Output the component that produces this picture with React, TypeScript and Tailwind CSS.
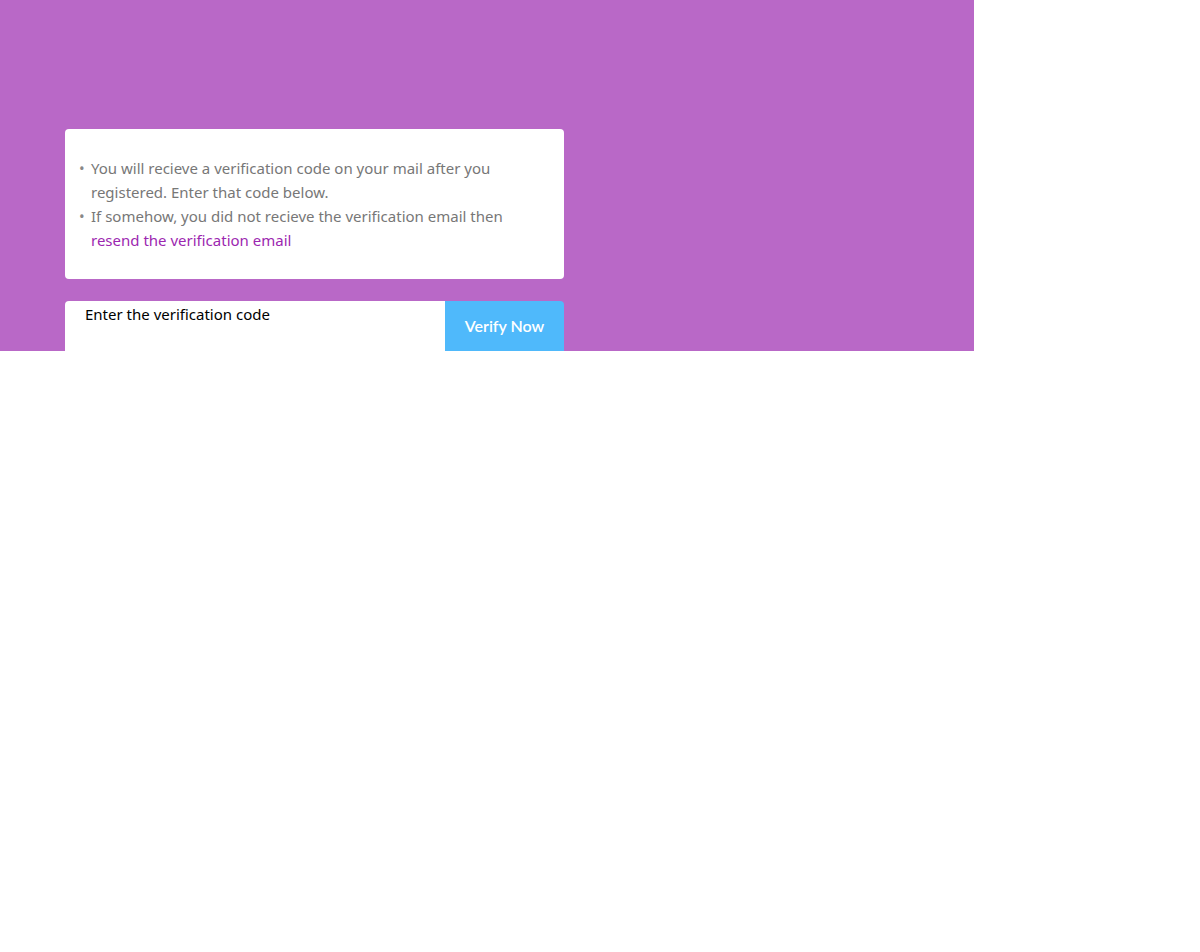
import React from "react";

function Item({ children }: { children: React.ReactNode }) {
  return (
    <li className="flex">
      <span className="w-[26px] shrink-0 pl-[14px] text-[15px] leading-[24px] text-[#888888]">•</span>
      <span>{children}</span>
    </li>
  );
}

export default function App() {
  return (
    <div className="w-[1200px] h-[952px] bg-white" style={{ fontFamily: '"Noto Sans", "Open Sans", sans-serif' }}>
      <div className="w-[974px] h-[351px] overflow-hidden bg-[#b968c7] pt-[129px] pl-[65px]">
        <div className="w-[499px] h-[150px] bg-white rounded-[4px] pt-[27px] pr-4">
          <ul className="text-[15px] leading-[24px] text-[#777777]">
            <Item>
              You will recieve a verification code on your mail after you
              <br />
              registered. Enter that code below.
            </Item>
            <Item>
              If somehow, you did not recieve the verification email then
              <br />
              <a className="text-[#9c27b0] cursor-pointer">resend the verification email</a>
            </Item>
          </ul>
        </div>
        <div className="mt-[22px] w-[499px] h-[60px] flex">
          <div className="w-[380px] h-full bg-white rounded-l-[4px] pl-[20px] pt-[1px] text-[15px] leading-[24px] text-black overflow-hidden whitespace-nowrap">
            Enter the verification code
          </div>
          <button className="w-[119px] h-[50px] bg-[#4fb9fb] rounded-tr-[4px] text-white text-[16px] font-semibold" style={{ fontFamily: 'Lato, "Noto Sans", sans-serif' }}>
            Verify Now
          </button>
        </div>
      </div>
    </div>
  );
}
